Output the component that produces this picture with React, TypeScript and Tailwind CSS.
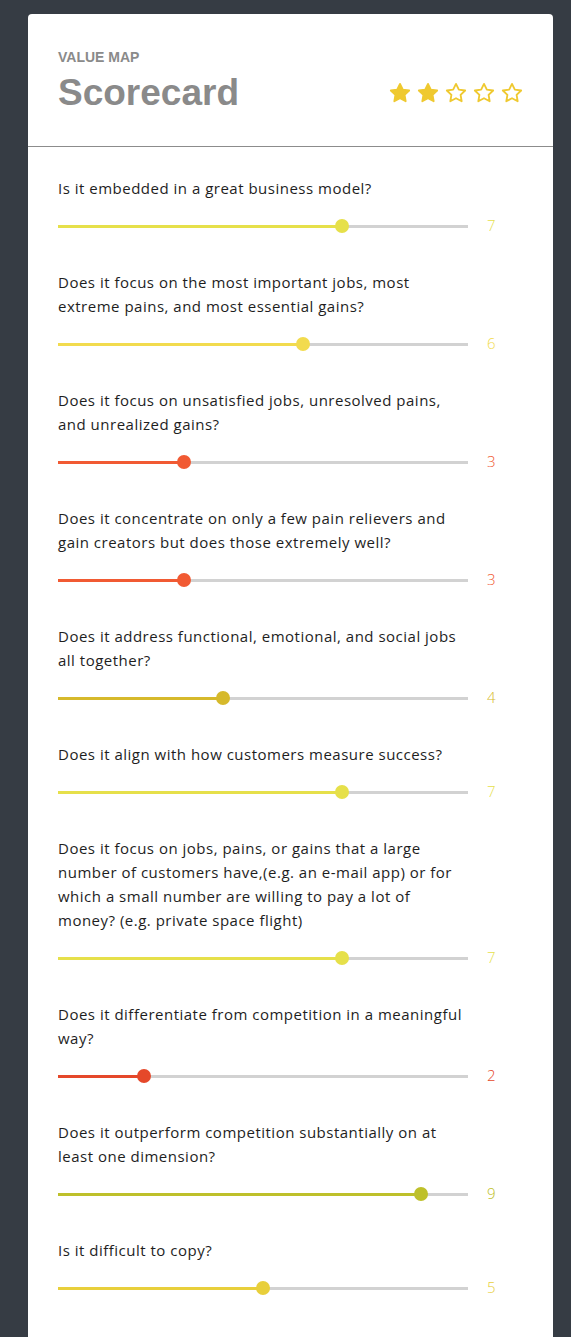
import React from 'react';

interface Question {
  lines: string[];
  value: number;
  color: string;
}

const questions: Question[] = [
  { lines: ['Is it embedded in a great business model?'], value: 7, color: '#e6e04a' },
  {
    lines: ['Does it focus on the most important jobs, most', 'extreme pains, and most essential gains?'],
    value: 6,
    color: '#f2db4e',
  },
  {
    lines: ['Does it focus on unsatisfied jobs, unresolved pains,', 'and unrealized gains?'],
    value: 3,
    color: '#f15a33',
  },
  {
    lines: ['Does it concentrate on only a few pain relievers and', 'gain creators but does those extremely well?'],
    value: 3,
    color: '#f15a33',
  },
  {
    lines: ['Does it address functional, emotional, and social jobs', 'all together?'],
    value: 4,
    color: '#d6b92b',
  },
  { lines: ['Does it align with how customers measure success?'], value: 7, color: '#e6e04a' },
  {
    lines: [
      'Does it focus on jobs, pains, or gains that a large',
      'number of customers have,(e.g. an e-mail app) or for',
      'which a small number are willing to pay a lot of',
      'money? (e.g. private space flight)',
    ],
    value: 7,
    color: '#e6e04a',
  },
  {
    lines: ['Does it differentiate from competition in a meaningful', 'way?'],
    value: 2,
    color: '#e5482a',
  },
  {
    lines: ['Does it outperform competition substantially on at', 'least one dimension?'],
    value: 9,
    color: '#bec02a',
  },
  { lines: ['Is it difficult to copy?'], value: 5, color: '#e8cf3b' },
];

const StarIcon: React.FC<{ filled: boolean }> = ({ filled }) => (
  <svg width="22" height="22" viewBox="0 0 24 24">
    <polygon
      points="12,2 15.09,8.26 22,9.27 17,14.14 18.18,21.02 12,17.77 5.82,21.02 7,14.14 2,9.27 8.91,8.26"
      fill={filled ? '#efc930' : 'none'}
      stroke="#efc930"
      strokeWidth="2"
      strokeLinejoin="round"
    />
  </svg>
);

const Slider: React.FC<{ value: number; color: string }> = ({ value, color }) => {
  const thumbLeft = value * 39.6;
  return (
    <div className="flex items-center mt-[18px]">
      <div className="relative w-[410px] h-[14px]">
        <div className="absolute left-0 right-0 top-[6px] h-[3px] bg-[#d2d2d2]" />
        <div
          className="absolute left-0 top-[6px] h-[3px]"
          style={{ width: thumbLeft + 7, backgroundColor: color }}
        />
        <div
          className="absolute top-0 w-[14px] h-[14px] rounded-full"
          style={{ left: thumbLeft, backgroundColor: color }}
        />
      </div>
      <span
        className="ml-[19px] text-[15px] leading-none font-light font-['Open_Sans',sans-serif]"
        style={{ color }}
      >
        {value}
      </span>
    </div>
  );
};

export default function App() {
  return (
    <div className="h-[1337px] overflow-hidden bg-[#363c44] pt-[14px] pl-[28px]">
      <div className="w-[525px] min-h-[1400px] bg-white rounded-t-[4px]">
        {/* Header */}
        <div className="pt-[35px] pb-[33px] pl-[30px] pr-[30px] border-b border-[#8c8c8c]">
          <div className="text-[14px] leading-4 font-bold text-[#8a8a8a] font-['Liberation_Sans',Arial,sans-serif]">
            VALUE MAP
          </div>
          <div className="mt-2 flex items-center justify-between">
            <h1 className="text-[37px] leading-10 font-bold text-[#8a8a8a] font-['Liberation_Sans',Arial,sans-serif]">
              Scorecard
            </h1>
            <div className="flex gap-[6px]">
              {[0, 1, 2, 3, 4].map((i) => (
                <StarIcon key={i} filled={i < 2} />
              ))}
            </div>
          </div>
        </div>

        {/* Questions */}
        <div className="pt-[29px] pl-[30px] flex flex-col gap-[37px]">
          {questions.map((q, i) => (
            <div key={i}>
              <p className="text-[15px] leading-6 text-[#1e1e1e] font-['Open_Sans',sans-serif] tracking-[0.5px]">
                {q.lines.map((line, j) => (
                  <span key={j} className="block whitespace-nowrap">
                    {line}
                  </span>
                ))}
              </p>
              <Slider value={q.value} color={q.color} />
            </div>
          ))}
        </div>
      </div>
    </div>
  );
}
